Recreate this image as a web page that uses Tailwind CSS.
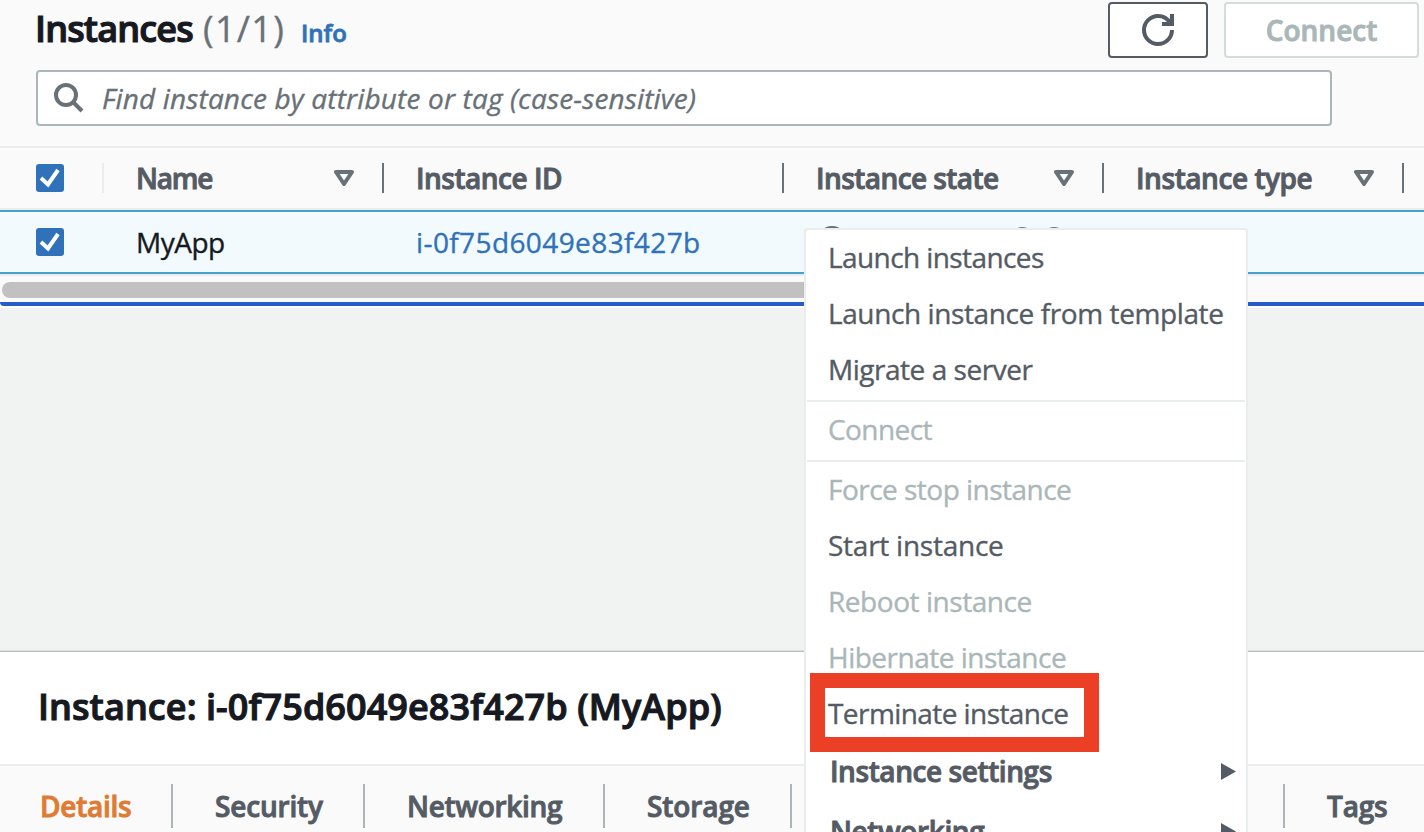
<!DOCTYPE html>
<html lang="en">
<head>
<meta charset="utf-8">
<title>Instances</title>
<script src="https://cdn.jsdelivr.net/npm/@tailwindcss/browser@4"></script>
</head>
<body class="relative flex h-[832px] w-[1424px] flex-col overflow-hidden bg-[#fafafa] font-['Open_Sans','Liberation_Sans',sans-serif] text-[28px] text-[#545b64] [-webkit-text-stroke:0.35px]">

  <!-- Panel header -->
  <header class="flex h-[146px] shrink-0 flex-col">
    <div class="flex h-[70px] items-start pl-[35px] pr-[5px]">
      <div class="flex items-baseline pt-px leading-[56px]">
        <h1 class="w-[168px] whitespace-nowrap text-[36px] font-semibold tracking-[-0.85px] text-[#16191f] [-webkit-text-stroke:1.1px]">Instances</h1>
        <span class="w-[98px] whitespace-nowrap text-[36px] tracking-[1.3px] text-[#687078]">(1/1)</span>
        <a class="text-[24px] font-semibold text-[#3072b9] [-webkit-text-stroke:0.8px]">Info</a>
      </div>
      <div class="ml-auto flex gap-4 pt-[2px]">
        <button class="flex h-14 w-[100px] items-center justify-center rounded-[4px] border-2 border-[#545b64] bg-white">
          <svg class="h-8 w-8" viewBox="0 0 32 32" fill="none" stroke="#545b64" stroke-width="4"><path d="M30 16a14 14 0 1 1-14-14c5 0 9.500 2.500 12 7"/><path d="M30 0v10H20"/></svg>
        </button>
        <button class="h-14 w-[195px] rounded-[4px] border-2 border-[#d5dbdb] bg-white font-semibold leading-[52px] text-[#aab7b8] [-webkit-text-stroke:0.9px]">Connect</button>
      </div>
    </div>
    <div class="ml-9 flex h-14 w-[1296px] items-center rounded-[4px] border-2 border-[#aab7b8] bg-white pl-[16px]">
      <svg class="h-[30px] w-[30px]" viewBox="0 0 30 30" fill="none" stroke="#687078" stroke-width="4"><circle cx="12" cy="12" r="10"/><path d="M19 19l9 9"/></svg>
      <span class="ml-[18px] whitespace-nowrap italic tracking-[0.15px] text-[#687078]">Find instance by attribute or tag (case-sensitive)</span>
    </div>
  </header>

  <!-- Table header -->
  <div class="flex h-16 shrink-0 items-center border-y-2 border-[#eaeded] font-semibold [-webkit-text-stroke:0.9px]">
    <div class="flex h-[30px] w-[104px] items-center border-r-2 border-[#eaeded] pl-9">
      <svg class="h-7 w-7" viewBox="0 0 28 28"><rect width="28" height="28" rx="3" fill="#3072b9"/><path d="M5 14l7 6.500L22 6" fill="none" stroke="#fff" stroke-width="4"/></svg>
    </div>
    <div class="flex h-[30px] w-[280px] items-center border-r-2 border-[#687078] pl-8 pr-[28px]">
      <span class="pb-px tracking-[-1.2px]">Name</span>
      <svg class="ml-auto h-4 w-5" viewBox="0 0 20 16" fill="none" stroke="#687078" stroke-width="4" stroke-linejoin="round"><path d="M2 2h16l-8 12z"/></svg>
    </div>
    <div class="flex h-[30px] w-[400px] items-center border-r-2 border-[#687078] pl-8">
      <span class="pb-px tracking-[-0.5px]">Instance ID</span>
    </div>
    <div class="flex h-[30px] w-[320px] items-center border-r-2 border-[#687078] pl-8 pr-[28px]">
      <span class="pb-px tracking-[-0.57px]">Instance state</span>
      <svg class="ml-auto h-4 w-5" viewBox="0 0 20 16" fill="none" stroke="#687078" stroke-width="4" stroke-linejoin="round"><path d="M2 2h16l-8 12z"/></svg>
    </div>
    <div class="flex h-[30px] w-[300px] items-center border-r-2 border-[#687078] pl-8 pr-[28px]">
      <span class="pb-px tracking-[-0.44px]">Instance type</span>
      <svg class="ml-auto h-4 w-5" viewBox="0 0 20 16" fill="none" stroke="#687078" stroke-width="4" stroke-linejoin="round"><path d="M2 2h16l-8 12z"/></svg>
    </div>
  </div>

  <!-- Selected row -->
  <div class="flex h-16 shrink-0 items-center border-y-2 border-[#44a2cc] bg-[#f2fafd]">
    <div class="w-[136px] pl-9">
      <svg class="h-7 w-7" viewBox="0 0 28 28"><rect width="28" height="28" rx="3" fill="#3072b9"/><path d="M5 14l7 6.500L22 6" fill="none" stroke="#fff" stroke-width="4"/></svg>
    </div>
    <span class="w-[280px] pb-px tracking-[-0.51px] text-[#16191f]">MyApp</span>
    <span class="w-[400px] pb-px tracking-[0.4px] text-[#3072b9]">i-0f75d6049e83f427b</span>
    <svg class="h-8 w-[260px]" viewBox="0 0 260 32" fill="none" stroke="#687078" stroke-width="3"><circle cx="16" cy="16" r="14.500"/><circle cx="206" cy="12.500" r="10"/><path d="M213 19l7 7"/><circle cx="238" cy="12.500" r="10"/><path d="M245 19l7 7"/></svg>
  </div>

  <!-- Horizontal scrollbar -->
  <div class="h-7 shrink-0 border-t-2 border-[#eaeded] pl-[2px] pt-[6px]">
    <div class="h-4 w-[1000px] rounded-full bg-[#c1c1c1]"></div>
  </div>
  <div class="h-1 shrink-0 rounded-bl-[4px] bg-[#265bc9]"></div>
  <div class="h-[2px] shrink-0 bg-white"></div>
  <div class="flex-1 bg-[#f1f3f3]"></div>

  <!-- Details panel -->
  <section class="flex h-[182px] shrink-0 flex-col border-t border-[#d9dddd]">
    <div class="h-[115px] border-b-2 border-t border-b-[#eaeded] border-t-[#b9bfbf] bg-white pl-[38px]">
      <h2 class="whitespace-nowrap text-[36px] font-semibold leading-[109px] tracking-[0.08px] text-[#16191f] [-webkit-text-stroke:1.1px]">Instance: i-0f75d6049e83f427b (MyApp)</h2>
    </div>
    <nav class="flex flex-1 items-start pt-[18px] font-semibold leading-[44px] [-webkit-text-stroke:0.9px]">
      <a class="h-11 w-[173px] border-r-2 border-[#aab7b8] pl-[40px] tracking-[-0.25px] text-[#df7b32]">Details</a>
      <a class="h-11 w-[192px] border-r-2 border-[#aab7b8] pl-[42px] tracking-[-0.17px]">Security</a>
      <a class="h-11 w-[240px] border-r-2 border-[#aab7b8] pl-[42px] tracking-[-0.3px]">Networking</a>
      <a class="h-11 w-[187px] border-r-2 border-[#aab7b8] pl-[42px] tracking-[-0.1px]">Storage</a>
      <a class="h-11 w-[493px] border-r-2 border-[#aab7b8]"></a>
      <a class="h-11 pl-[42px] tracking-[-0.19px]">Tags</a>
    </nav>
  </section>

  <!-- Context menu -->
  <div class="absolute left-[804px] top-[228px] h-[640px] w-[444px] rounded-t-[4px] border-2 border-[#eaeded] bg-white">
    <ul class="h-[170px] whitespace-nowrap pl-[22px] leading-[55px]">
      <li class="h-14 tracking-[-0.59px]">Launch instances</li>
      <li class="h-14 tracking-[-0.4px]">Launch instance from template</li>
      <li class="h-14 tracking-[-0.47px]">Migrate a server</li>
    </ul>
    <div class="mx-px h-[62px] border-y-2 border-[#eaeded] pl-[21px] leading-[55px] tracking-[-0.58px] text-[#aab7b8]">Connect</div>
    <ul class="whitespace-nowrap pl-[22px] leading-[55px]">
      <li class="h-14 tracking-[-0.52px] text-[#aab7b8]">Force stop instance</li>
      <li class="h-14 tracking-[-0.25px]">Start instance</li>
      <li class="h-14 tracking-[-0.45px] text-[#aab7b8]">Reboot instance</li>
      <li class="h-14 tracking-[-0.5px] text-[#aab7b8]">Hibernate instance</li>
      <li class="h-14 tracking-[-0.57px]">Terminate instance</li>
      <li class="flex h-[60px] items-center justify-between pb-[2px] pl-[2px] pr-2.5 font-semibold tracking-[-0.42px] [-webkit-text-stroke:0.9px]">Instance settings
        <svg class="h-[17px] w-4" viewBox="0 0 16 17"><path d="M1 0l15 8.500L1 17z" fill="#545b64"/></svg>
      </li>
      <li class="flex h-[60px] items-center justify-between pb-[2px] pl-[2px] pr-2.5 font-semibold tracking-[-0.4px] [-webkit-text-stroke:0.9px]">Networking
        <svg class="h-[17px] w-4" viewBox="0 0 16 17"><path d="M1 0l15 8.500L1 17z" fill="#545b64"/></svg>
      </li>
    </ul>
  </div>
  <div class="absolute left-[810px] top-[673px] h-[79px] w-[289px] border-[15px] border-[#eb4026]"></div>
</body>
</html>
